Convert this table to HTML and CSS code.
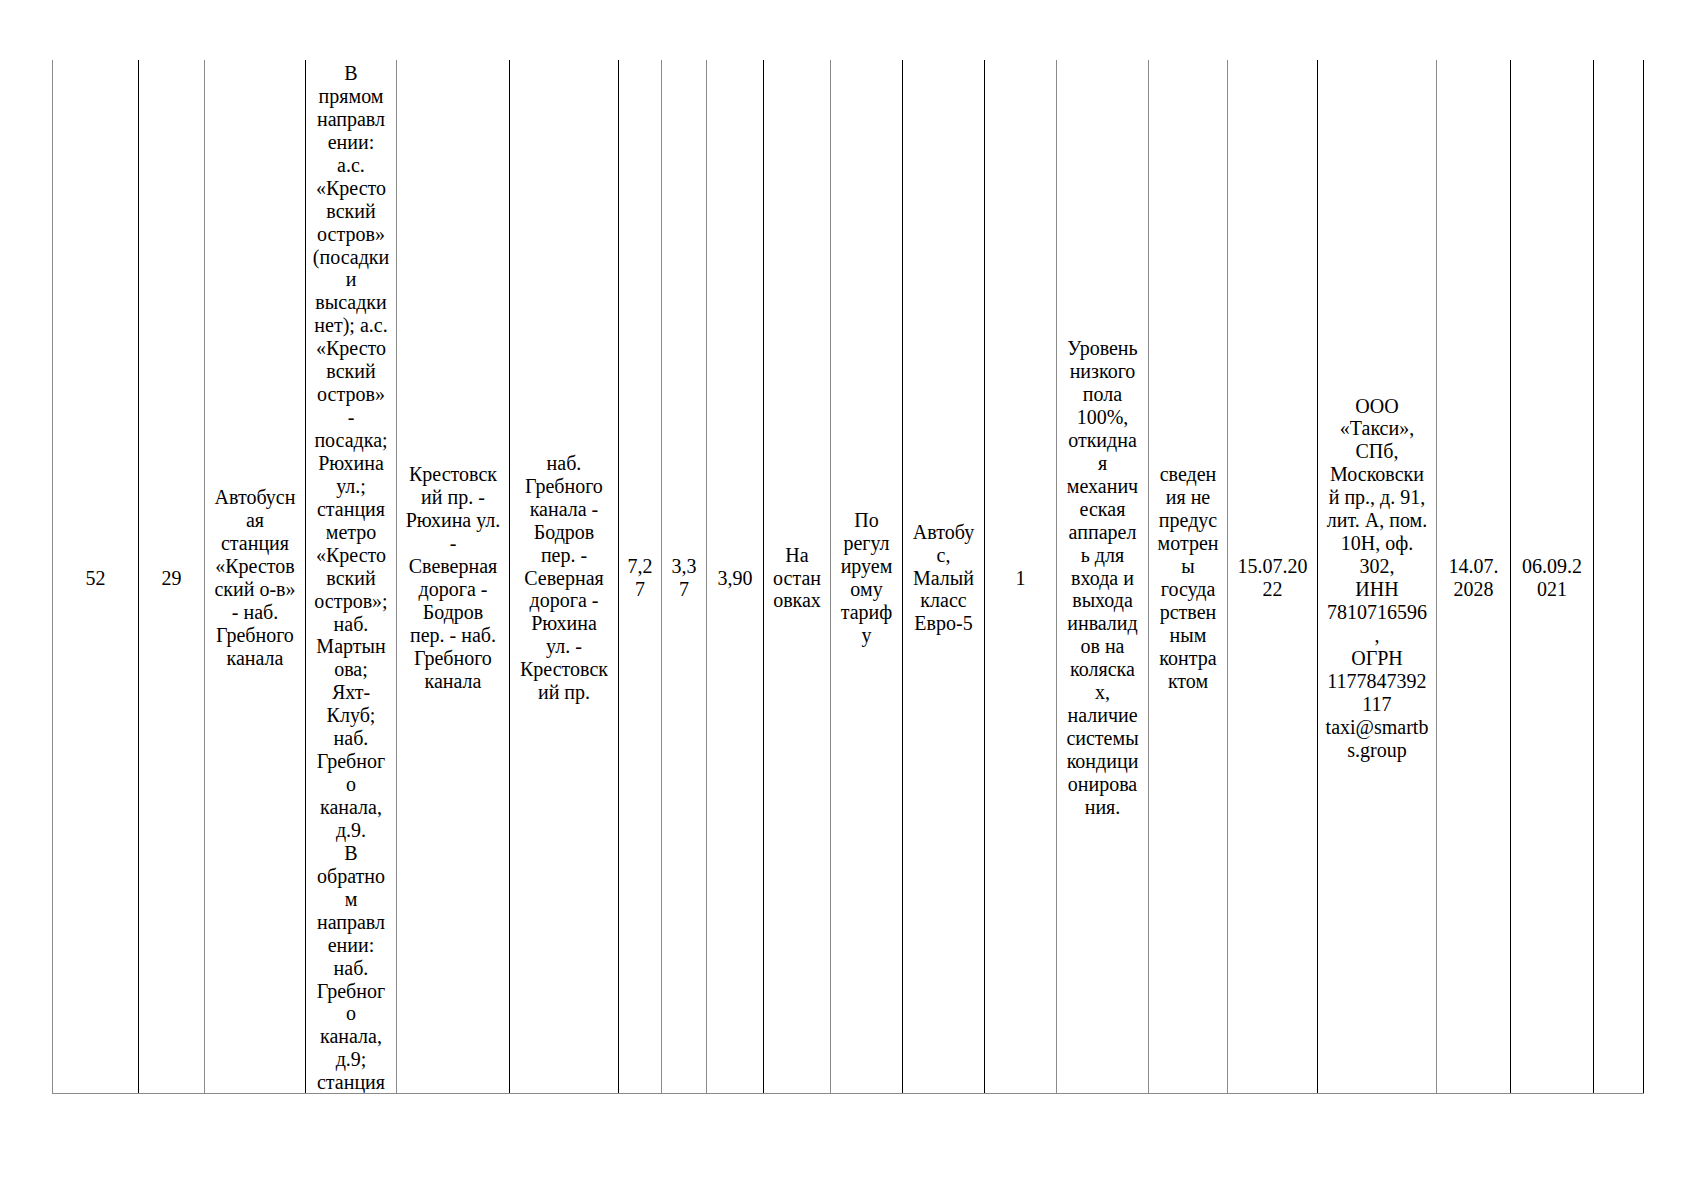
FILE: index.html
```html
<!DOCTYPE html>
<html lang="ru">
<head>
<meta charset="utf-8">
<title>Реестр маршрутов</title>
<link rel="stylesheet" href="styles.css">
</head>
<body>
<div class="sheet">
  <div class="row">
    <div class="cell g"><p>52</p></div>
    <div class="cell"><p>29</p></div>
    <div class="cell g"><p>Автобусн<br>ая<br>станция<br>«Крестов<br>ский о-в»<br>- наб.<br>Гребного<br>канала</p></div>
    <div class="cell top"><p>В<br>прямом<br>направл<br>ении:<br>а.с.<br>«Кресто<br>вский<br>остров»<br>(посадки<br>и<br>высадки<br>нет); а.с.<br>«Кресто<br>вский<br>остров»<br>-<br>посадка;<br>Рюхина<br>ул.;<br>станция<br>метро<br>«Кресто<br>вский<br>остров»;<br>наб.<br>Мартын<br>ова;<br>Яхт-<br>Клуб;<br>наб.<br>Гребног<br>о<br>канала,<br>д.9.<br>В<br>обратно<br>м<br>направл<br>ении:<br>наб.<br>Гребног<br>о<br>канала,<br>д.9;<br>станция</p></div>
    <div class="cell g"><p>Крестовск<br>ий пр. -<br>Рюхина ул.<br>-<br>Свеверная<br>дорога -<br>Бодров<br>пер. - наб.<br>Гребного<br>канала</p></div>
    <div class="cell"><p>наб.<br>Гребного<br>канала -<br>Бодров<br>пер. -<br>Северная<br>дорога -<br>Рюхина<br>ул. -<br>Крестовск<br>ий пр.</p></div>
    <div class="cell"><p>7,2<br>7</p></div>
    <div class="cell g"><p>3,3<br>7</p></div>
    <div class="cell g"><p>3,90</p></div>
    <div class="cell"><p>На<br>остан<br>овках</p></div>
    <div class="cell g"><p>По<br>регул<br>ируем<br>ому<br>тариф<br>у</p></div>
    <div class="cell"><p>Автобу<br>с,<br>Малый<br>класс<br>Евро-5</p></div>
    <div class="cell"><p>1</p></div>
    <div class="cell g"><p>Уровень<br>низкого<br>пола<br>100%,<br>откидна<br>я<br>механич<br>еская<br>аппарел<br>ь для<br>входа и<br>выхода<br>инвалид<br>ов на<br>коляска<br>х,<br>наличие<br>системы<br>кондици<br>онирова<br>ния.</p></div>
    <div class="cell g"><p>сведен<br>ия не<br>предус<br>мотрен<br>ы<br>госуда<br>рствен<br>ным<br>контра<br>ктом</p></div>
    <div class="cell g"><p>15.07.20<br>22</p></div>
    <div class="cell"><p>ООО<br>«Такси»,<br>СПб,<br>Московски<br>й пр., д. 91,<br>лит. А, пом.<br>10Н, оф.<br>302,<br>ИНН<br>7810716596<br>,<br>ОГРН<br>1177847392<br>117<br>taxi@smartb<br>s.group</p></div>
    <div class="cell g"><p>14.07.<br>2028</p></div>
    <div class="cell"><p>06.09.2<br>021</p></div>
    <div class="cell last"><p></p></div>
  </div>
</div>
</body>
</html>
```

FILE: styles.css
```css
html, body {
  margin: 0;
  padding: 0;
  background: #ffffff;
}

body {
  font-family: "Liberation Serif", "Times New Roman", serif;
  font-size: 20px;
  line-height: 22.93px;
  color: #000000;
}

.sheet {
  padding: 60px 0 0 52px;
}

.row {
  display: grid;
  grid-template-columns: 86px 66px 101px 91px 113px 109px 43px 45px 57px 67px 72px 82px 72px 92px 79px 90px 119px 74px 83px 51px;
  height: 1033px;
  width: max-content;
  border-bottom: 1px solid #8a8a8a;
}

.cell {
  box-sizing: border-box;
  border-left: 1px solid #000000;
  display: flex;
  align-items: center;
  justify-content: center;
  text-align: center;
  white-space: nowrap;
  overflow: hidden;
  min-width: 0;
  padding-top: 3px;
}

.cell p {
  margin: 0;
}

.cell.g {
  border-left-color: #8a8a8a;
}

.cell.top {
  align-items: flex-start;
  padding-top: 2px;
}

.cell.last {
  border-right: 1px solid #000000;
}
```
